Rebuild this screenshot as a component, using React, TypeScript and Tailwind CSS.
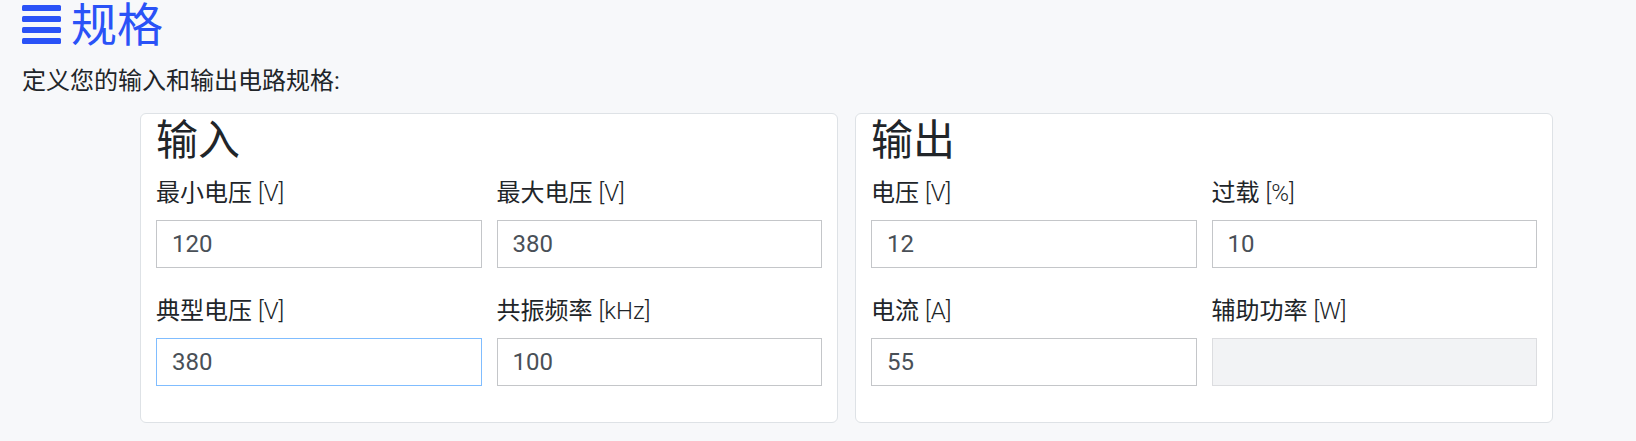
import React from "react";

const FONT = "font-['Roboto','Noto_Sans_CJK_SC',sans-serif]";

type Field = {
  label: string;
  unit: string;
  value: string;
  focused?: boolean;
  disabled?: boolean;
};

function BarsIcon() {
  return (
    <svg width="40" height="40" viewBox="0 0 40 40" className="shrink-0">
      <rect x="0" y="0" width="39" height="6" rx="1.5" fill="#2a52f7" />
      <rect x="0" y="11" width="39" height="6" rx="1.5" fill="#2a52f7" />
      <rect x="0" y="22" width="39" height="6" rx="1.5" fill="#2a52f7" />
      <rect x="0" y="33" width="39" height="6" rx="1.5" fill="#2a52f7" />
    </svg>
  );
}

function Input({ field }: { field: Field }) {
  const border = field.focused
    ? "border-[#80bdff]"
    : field.disabled
      ? "border-[#dcdde0] bg-[#f2f3f5]"
      : "border-[#c4c6c9] bg-white";
  return (
    <div className="flex flex-col">
      <label className="text-[24px] leading-[36px] text-[#212529] mb-[9px]">
        {field.label} <span className="font-light">{field.unit}</span>
      </label>
      <input
        readOnly
        disabled={field.disabled}
        value={field.value}
        className={`h-[48px] w-full border px-[15px] text-[24px] text-[#495057] outline-none ${FONT} ${border}`}
      />
    </div>
  );
}

function Card({ title, fields }: { title: string; fields: Field[] }) {
  return (
    <div className="flex-1 rounded-[6px] border border-[#dee2e6] bg-white px-[15px] pt-[2px] pb-[36px]">
      <h2 className="text-[42px] leading-[50px] text-[#212529]">{title}</h2>
      <div className="mt-[9px] grid grid-cols-2 gap-x-[15px] gap-y-[25px]">
        {fields.map((f) => (
          <Input key={f.label} field={f} />
        ))}
      </div>
    </div>
  );
}

export default function App() {
  const inputs: Field[] = [
    { label: "最小电压", unit: "[V]", value: "120" },
    { label: "最大电压", unit: "[V]", value: "380" },
    { label: "典型电压", unit: "[V]", value: "380", focused: true },
    { label: "共振频率", unit: "[kHz]", value: "100" },
  ];
  const outputs: Field[] = [
    { label: "电压", unit: "[V]", value: "12" },
    { label: "过载", unit: "[%]", value: "10" },
    { label: "电流", unit: "[A]", value: "55" },
    { label: "辅助功率", unit: "[W]", value: "", disabled: true },
  ];

  return (
    <div className={`min-h-[441px] w-full bg-[#f7f8fa] ${FONT}`}>
      <div className="flex h-[50px] items-center gap-[9px] px-[22px]">
        <BarsIcon />
        <h1 className="text-[46px] leading-[50px] text-[#2a52f7]">规格</h1>
      </div>
      <p className="mt-[13px] px-[22px] text-[24px] leading-[36px] text-[#212529]">
        定义您的输入和输出电路规格:
      </p>
      <div className="mt-[14px] flex gap-[17px] pl-[140px] pr-[83px]">
        <Card title="输入" fields={inputs} />
        <Card title="输出" fields={outputs} />
      </div>
    </div>
  );
}
